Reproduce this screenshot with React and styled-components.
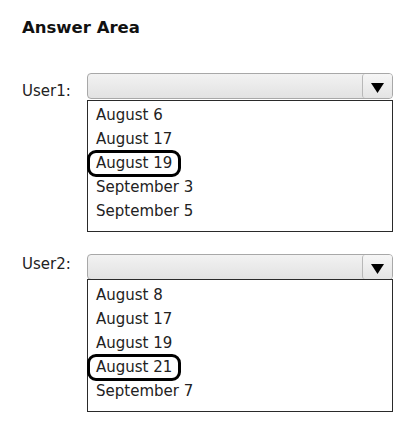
import React from 'react';
import styled, { createGlobalStyle } from 'styled-components';

const GlobalStyle = createGlobalStyle`
  body {
    margin: 0;
    background: #ffffff;
    font-family: "DejaVu Sans", Verdana, sans-serif;
    color: #222222;
  }
`;

const Page = styled.div`
  padding: 18px 0 0 22px;
`;

const Title = styled.h1`
  margin: 0 0 35px 0;
  font-size: 16.5px;
  line-height: 20px;
  font-weight: bold;
  color: #111111;
`;

const Group = styled.div`
  display: grid;
  grid-template-columns: 65px 306px;
  margin-bottom: 22px;
`;

const Label = styled.div`
  font-size: 15px;
  line-height: 20px;
  padding-top: ${(p) => p.drop}px;
`;

const Select = styled.div`
  display: flex;
  height: 26px;
  box-sizing: border-box;
  border: 1px solid #a8a8a8;
  border-radius: 4px;
  background: linear-gradient(#f2f2f2, #e2e2e2);
`;

const Field = styled.div`
  flex: 1;
`;

const Arrow = styled.div`
  width: 30px;
  display: flex;
  align-items: center;
  justify-content: center;
  padding-top: 3px;
  box-sizing: border-box;
  border-left: 1px solid #b8b8b8;
  border-radius: 3px;
  background: linear-gradient(#f6f6f6, #e4e4e4);
`;

const List = styled.div`
  grid-column: 2;
  border: 1px solid #2a2a2a;
  margin-top: -1px;
  padding: ${(p) => p.top}px 0 8px 0;
  background: #ffffff;
`;

const Option = styled.div`
  display: flex;
  align-items: center;
  height: 24px;
  font-size: 15px;
`;

const OptionText = styled.span`
  box-sizing: border-box;
  line-height: 21px;
  padding: 0 8px;
  ${(p) =>
    p.$marked &&
    `
    height: 27px;
    margin-left: -1px;
    padding: 0 6px;
    border: 3px solid #000;
    border-radius: 9px;
  `}
`;

const Triangle = () => (
  <svg width="13" height="10" viewBox="0 0 13 10">
    <polygon points="0,0 13,0 6.5,10" fill="#000" />
  </svg>
);

const groups = [
  {
    user: 'User1:',
    drop: 8,
    top: 2,
    options: ['August 6', 'August 17', 'August 19', 'September 3', 'September 5'],
    marked: 2,
  },
  {
    user: 'User2:',
    drop: 0,
    top: 3,
    options: ['August 8', 'August 17', 'August 19', 'August 21', 'September 7'],
    marked: 3,
  },
];

export default function App() {
  return (
    <Page>
      <GlobalStyle />
      <Title>Answer Area</Title>
      {groups.map((g) => (
        <Group key={g.user}>
          <Label drop={g.drop}>{g.user}</Label>
          <Select>
            <Field />
            <Arrow>
              <Triangle />
            </Arrow>
          </Select>
          <List top={g.top}>
            {g.options.map((o, i) => (
              <Option key={o}>
                <OptionText $marked={i === g.marked}>{o}</OptionText>
              </Option>
            ))}
          </List>
        </Group>
      ))}
    </Page>
  );
}
